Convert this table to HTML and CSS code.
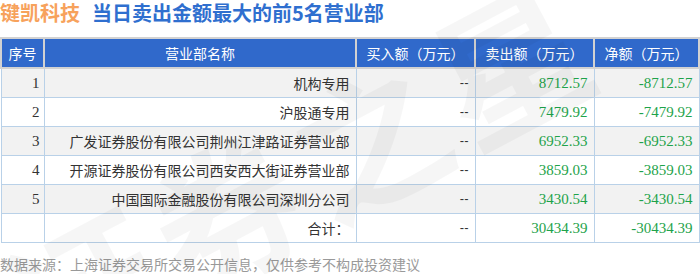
FILE: index.html
```html
<!DOCTYPE html>
<html lang="zh">
<head>
<meta charset="utf-8">
<link rel="stylesheet" href="styles.css">
</head>
<body>
<div class="page">
  <div class="watermark wm1">证券之星</div>
  <div class="watermark wm2">证券之星</div>
  <h1 class="title"><span class="stock">键凯科技</span><span class="headline">当日卖出金额最大的前5名营业部</span></h1>
  <table class="grid">
    <colgroup>
      <col class="c1"><col class="c2"><col class="c3"><col class="c4"><col class="c5">
    </colgroup>
    <thead>
      <tr><th>序号</th><th>营业部名称</th><th>买入额（万元）</th><th>卖出额（万元）</th><th>净额（万元）</th></tr>
    </thead>
    <tbody>
      <tr class="odd"><td class="num">1</td><td>机构专用</td><td class="dash">--</td><td class="g">8712.57</td><td class="g">-8712.57</td></tr>
      <tr><td class="num">2</td><td>沪股通专用</td><td class="dash">--</td><td class="g">7479.92</td><td class="g">-7479.92</td></tr>
      <tr class="odd"><td class="num">3</td><td>广发证券股份有限公司荆州江津路证券营业部</td><td class="dash">--</td><td class="g">6952.33</td><td class="g">-6952.33</td></tr>
      <tr><td class="num">4</td><td>开源证券股份有限公司西安西大街证券营业部</td><td class="dash">--</td><td class="g">3859.03</td><td class="g">-3859.03</td></tr>
      <tr class="odd"><td class="num">5</td><td>中国国际金融股份有限公司深圳分公司</td><td class="dash">--</td><td class="g">3430.54</td><td class="g">-3430.54</td></tr>
      <tr><td class="num"></td><td>合计：</td><td class="dash">--</td><td class="g">30434.39</td><td class="g">-30434.39</td></tr>
    </tbody>
  </table>
  <p class="source">数据来源：上海证券交易所交易公开信息，仅供参考不构成投资建议</p>
</div>
</body>
</html>
```

FILE: styles.css
```css
html, body {
  margin: 0;
  padding: 0;
  background: #fff;
}
.page {
  position: relative;
  width: 700px;
  height: 274px;
  overflow: hidden;
  font-family: "Noto Sans CJK SC", sans-serif;
}
.watermark {
  position: absolute;
  font-size: 150px;
  font-weight: 700;
  color: rgba(0, 0, 0, 0.035);
  white-space: nowrap;
  transform: rotate(-28deg);
  pointer-events: none;
  z-index: 2;
  letter-spacing: 10px;
}
.wm1 { left: -20px; top: 60px; }
.wm2 { left: 520px; top: 140px; }
.title {
  margin: 0;
  height: 37px;
  font-size: 20px;
  line-height: 26px;
  font-weight: 700;
  white-space: nowrap;
}
.stock {
  color: #f7a25c;
  margin-right: 12px;
}
.headline {
  color: #2f6fcf;
}
.grid {
  border-collapse: collapse;
  table-layout: fixed;
  width: 698px;
  margin-left: 0;
  font-size: 14px;
  color: #333;
}
.c1 { width: 43px; }
.c2 { width: 312px; }
.c3 { width: 119px; }
.c4 { width: 119px; }
.c5 { width: 105px; }
.grid th {
  background: #3069cb;
  color: #fff;
  font-weight: 400;
  height: 28px;
  padding: 0;
  border: 2px solid #d2d2d2;
  text-align: center;
  font-size: 14px;
}
.grid td {
  height: 28px;
  padding: 0 6px 0 0;
  border: 1px solid #b9d1e8;
  text-align: right;
  white-space: nowrap;
  line-height: 20px;
}
.grid tr.odd td {
  background: #f2f2f2;
}
.grid td.num {
  font-family: "Liberation Serif", serif;
  font-size: 15px;
  padding-right: 4px;
}
.grid td.g {
  font-family: "Liberation Serif", serif;
  font-size: 15px;
  color: #1ea34a;
}
.grid td.dash {
  font-family: "Liberation Sans", sans-serif;
  font-size: 13px;
}
.source {
  margin: 11px 0 0 0;
  font-size: 14px;
  line-height: 20px;
  color: #999;
  white-space: nowrap;
}
```
